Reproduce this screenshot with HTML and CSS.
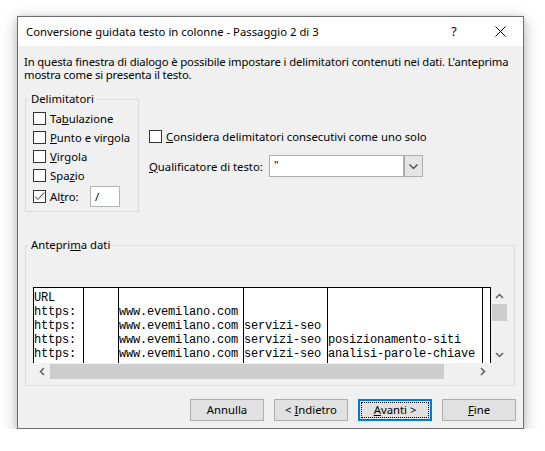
FILE: index.html
```html
<!DOCTYPE html>
<html lang="it">
<head>
<meta charset="utf-8">
<title>Conversione guidata testo in colonne</title>
<link rel="stylesheet" href="styles.css">
</head>
<body>
<div class="page">
  <div class="dialog">
    <div class="titlebar">
      <span class="title">Conversione guidata testo in colonne - Passaggio 2 di 3</span>
      <span class="tbtn help">?</span>
      <span class="tbtn close"><svg width="11" height="11" viewBox="0 0 11 11"><path d="M0.5 0.5 L10.5 10.5 M10.5 0.5 L0.5 10.5" stroke="#000" stroke-width="1" fill="none"/></svg></span>
    </div>
    <div class="body">
      <p class="desc">In questa finestra di dialogo è possibile impostare i delimitatori contenuti nei dati. L'anteprima<br>mostra come si presenta il testo.</p>
      <div class="top">
        <div class="group delims">
          <span class="legend">Delimitatori</span>
          <div class="cb-row"><span class="cb"></span><span>Ta<u>b</u>ulazione</span></div>
          <div class="cb-row"><span class="cb"></span><span><u>P</u>unto e virgola</span></div>
          <div class="cb-row"><span class="cb"></span><span><u>V</u>irgola</span></div>
          <div class="cb-row"><span class="cb"></span><span>Spa<u>z</u>io</span></div>
          <div class="cb-row altro"><span class="cb"><svg width="11" height="11" viewBox="0 0 11 11"><path d="M1 5.5 L4 8.5 L10 1.5" stroke="#333" stroke-width="1" fill="none"/></svg></span><span class="altro-label">Al<u>t</u>ro:</span><span class="textbox">/</span></div>
        </div>
        <div class="options">
          <div class="cb-row"><span class="cb"></span><span><u>C</u>onsidera delimitatori consecutivi come uno solo</span></div>
          <div class="qual">
            <span class="qlabel"><u>Q</u>ualificatore di testo:</span>
            <div class="combo">
              <span class="combo-val">"</span>
              <span class="combo-btn"><svg width="9" height="5" viewBox="0 0 9 5"><path d="M0.5 0.5 L4.5 4.5 L8.5 0.5" stroke="#444" stroke-width="1.2" fill="none"/></svg></span>
            </div>
          </div>
        </div>
      </div>
      <div class="group preview-group">
        <span class="legend">Antepri<u>m</u>a dati</span>
        <div class="preview">
          <div class="data-row">
            <div class="data">
              <div class="col c1">URL
https:
https:
https:
https:</div>
              <div class="col c2"> </div>
              <div class="col c3">
www.evemilano.com
www.evemilano.com
www.evemilano.com
www.evemilano.com</div>
              <div class="col c4">

servizi-seo
servizi-seo
servizi-seo</div>
              <div class="col c5">


posizionamento-siti
analisi-parole-chiave</div>
              <div class="col c6"> </div>
            </div>
            <div class="vscroll">
              <span class="arrow"><svg width="9" height="6" viewBox="0 0 9 6"><path d="M1 5 L4.5 1.5 L8 5" stroke="#606060" stroke-width="1.5" fill="none"/></svg></span>
              <span class="vthumb"></span>
              <span class="vtrack"></span>
              <span class="arrow"><svg width="9" height="6" viewBox="0 0 9 6"><path d="M1 1 L4.5 4.5 L8 1" stroke="#606060" stroke-width="1.5" fill="none"/></svg></span>
            </div>
          </div>
          <div class="hscroll-row">
            <div class="hscroll">
              <span class="arrow"><svg width="6" height="9" viewBox="0 0 6 9"><path d="M5 1 L1.5 4.5 L5 8" stroke="#606060" stroke-width="1.5" fill="none"/></svg></span>
              <span class="hthumb"></span>
              <span class="htrack"></span>
              <span class="arrow"><svg width="6" height="9" viewBox="0 0 6 9"><path d="M1 1 L4.5 4.5 L1 8" stroke="#606060" stroke-width="1.5" fill="none"/></svg></span>
            </div>
            <div class="corner"></div>
          </div>
        </div>
      </div>
      <div class="buttons">
        <span class="btn"><span>Annulla</span></span>
        <span class="btn"><span>&lt; <u>I</u>ndietro</span></span>
        <span class="btn default"><span class="focus"><span><u>A</u>vanti &gt;</span></span></span>
        <span class="btn"><span><u>F</u>ine</span></span>
      </div>
    </div>
  </div>
</div>
</body>
</html>
```
FILE: styles.css
```css
html, body {
  margin: 0;
  background: #fff;
}
body {
  font-family: "Noto Sans", "Open Sans", sans-serif;
  font-size: 11.3px;
  color: #000;
}
u {
  text-decoration: underline;
  text-underline-offset: 1px;
}
.page {
  padding: 16px 0 0 17px;
}
.dialog {
  width: 507px;
  height: 413px;
  box-sizing: border-box;
  border: 1px solid #6e6e6e;
  background: #f0f0f0;
  box-shadow: 0 5px 16px rgba(0, 0, 0, 0.26), 0 0 6px rgba(0, 0, 0, 0.12);
  display: flex;
  flex-direction: column;
  overflow: hidden;
}
.titlebar {
  height: 29px;
  flex: none;
  background: #fff;
  display: flex;
  align-items: center;
}
.title {
  flex: 1;
  padding-left: 8px;
  line-height: 16px;
  font-size: 11.3px;
  white-space: nowrap;
}
.tbtn {
  width: 46px;
  height: 29px;
  display: flex;
  align-items: center;
  justify-content: center;
}
.help {
  font-size: 12.5px;
}
.body {
  flex: 1;
  padding: 0 7px 0 6px;
  display: flex;
  flex-direction: column;
}
.desc {
  margin: 9px 0 0 0;
  line-height: 13px;
  letter-spacing: -0.15px;
  white-space: nowrap;
}
.top {
  display: flex;
  margin-top: 18px;
}
.group {
  position: relative;
  border: 1px solid #dcdcdc;
  box-sizing: border-box;
  margin-left: 1px;
}
.legend {
  position: absolute;
  top: -8px;
  left: 3px;
  padding: 0 2px;
  background: #f0f0f0;
  line-height: 14px;
  white-space: nowrap;
}
.delims {
  width: 114px;
  height: 113px;
  flex: none;
  padding: 9px 0 0 7px;
}
.cb-row {
  display: flex;
  align-items: center;
  height: 19px;
  gap: 4px;
  white-space: nowrap;
}
.cb {
  width: 13px;
  height: 13px;
  box-sizing: border-box;
  border: 1px solid #333;
  background: #fff;
  flex: none;
  display: flex;
  align-items: center;
  justify-content: center;
}
.cb-row.altro {
  height: 21px;
  margin-top: 1px;
}
.altro-label {
  width: 36px;
}
.textbox {
  width: 30px;
  height: 21px;
  box-sizing: border-box;
  border: 1px solid #b4b4b4;
  background: #fff;
  padding-left: 4px;
  line-height: 19px;
}
.options {
  margin-left: 10px;
  padding-top: 28px;
}
.qual {
  display: flex;
  align-items: center;
  margin-top: 9px;
}
.qlabel {
  width: 120px;
  white-space: nowrap;
}
.combo {
  width: 154px;
  height: 22px;
  box-sizing: border-box;
  border: 1px solid #adadad;
  background: #fff;
  display: flex;
}
.combo-val {
  flex: 1;
  padding-left: 4px;
  line-height: 18px;
}
.combo-btn {
  width: 17px;
  background: #e5e5e5;
  border-left: 2px solid #adadad;
  display: flex;
  align-items: center;
  justify-content: center;
}
.preview-group {
  margin-top: 33px;
  width: 490px;
  padding: 41px 6px 5px 7px;
}
.preview {
  width: 475px;
}
.data-row {
  display: flex;
  height: 76px;
}
.data {
  width: 458px;
  box-sizing: border-box;
  border: 1px solid #000;
  border-bottom: none;
  background: #fff;
  display: flex;
  overflow: hidden;
}
.col {
  font-family: "Liberation Mono", "Courier New", monospace;
  font-size: 12px;
  letter-spacing: -0.2px;
  line-height: 14px;
  white-space: pre;
  padding-top: 3px;
  overflow: hidden;
  flex: none;
}
.col + .col {
  border-left: 1px solid #000;
}
.c1 { width: 49px; }
.c2 { width: 34px; }
.c3 { width: 124px; }
.c4 { width: 83px; }
.c5 { width: 154px; }
.c6 { width: 7px; }
.vscroll {
  width: 17px;
  background: #f0f0f0;
  display: flex;
  flex-direction: column;
}
.arrow {
  width: 17px;
  height: 17px;
  flex: none;
  display: flex;
  align-items: center;
  justify-content: center;
}
.vthumb {
  height: 17px;
  margin: 0 1px;
  background: #cdcdcd;
}
.vtrack {
  flex: 1;
}
.hscroll-row {
  display: flex;
  height: 17px;
}
.hscroll {
  width: 458px;
  display: flex;
  background: #f0f0f0;
}
.hthumb {
  width: 394px;
  margin: 1px 0;
  background: #cdcdcd;
}
.htrack {
  flex: 1;
}
.corner {
  width: 17px;
}
.buttons {
  display: flex;
  justify-content: flex-end;
  gap: 10px;
  margin-top: 13px;
}
.btn {
  width: 74px;
  height: 22px;
  box-sizing: border-box;
  border: 1px solid #adadad;
  background: #e1e1e1;
  display: flex;
  align-items: center;
  justify-content: center;
  line-height: 14px;
  white-space: pre;
}
.btn.default {
  border: 2px solid #0078d7;
  padding: 1px;
}
.focus {
  width: 100%;
  height: 100%;
  box-sizing: border-box;
  border: 1px dotted #000;
  display: flex;
  align-items: center;
  justify-content: center;
}
```
